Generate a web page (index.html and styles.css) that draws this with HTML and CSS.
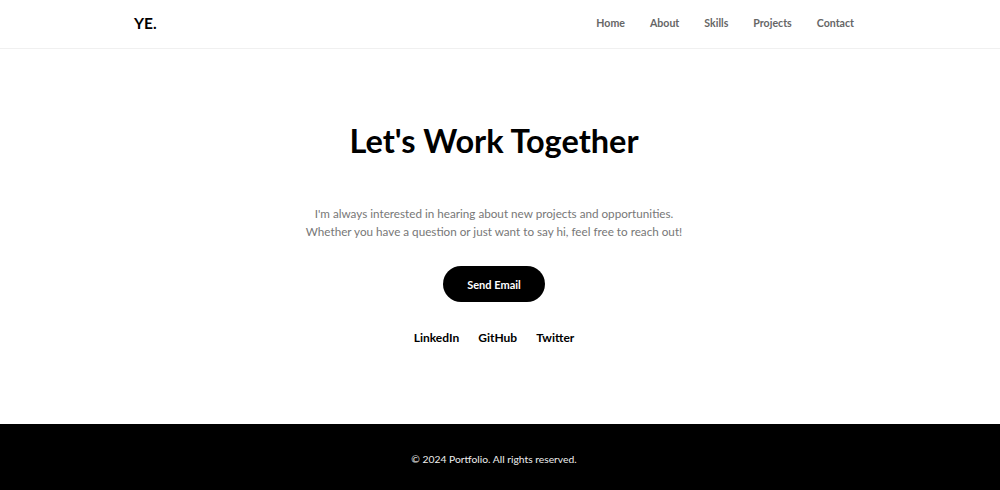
FILE: index.html
```html
<!DOCTYPE html>
<html lang="en">
<head>
<meta charset="utf-8">
<title>Portfolio</title>
<link rel="stylesheet" href="styles.css">
</head>
<body>
<header class="site-header">
  <div class="header-inner">
    <div class="logo">YE.</div>
    <nav class="nav">
      <a href="#">Home</a>
      <a href="#">About</a>
      <a href="#">Skills</a>
      <a href="#">Projects</a>
      <a href="#">Contact</a>
    </nav>
  </div>
</header>
<main class="contact">
  <h1 class="title">Let's Work Together</h1>
  <p class="lead">I'm always interested in hearing about new projects and opportunities.<br>Whether you have a question or just want to say hi, feel free to reach out!</p>
  <a class="btn" href="#">Send Email</a>
  <div class="socials">
    <a href="#">LinkedIn</a>
    <a href="#">GitHub</a>
    <a href="#">Twitter</a>
  </div>
</main>
<footer class="site-footer">
  <p>© 2024 Portfolio. All rights reserved.</p>
</footer>
</body>
</html>
```
FILE: styles.css
```css
* { box-sizing: border-box; }
html, body { margin: 0; padding: 0; }
body {
  font-family: Lato, "Open Sans", sans-serif;
  color: #000;
  background: #fff;
}
a { text-decoration: none; color: inherit; }

.site-header {
  height: 49px;
  border-bottom: 1px solid #f0f0f0;
  padding-right: 12px;
}
.header-inner {
  width: 720px;
  margin: 0 auto;
  height: 48px;
  padding-bottom: 2px;
  display: flex;
  align-items: center;
  justify-content: space-between;
}
.logo {
  font-weight: 700;
  font-size: 15.5px;
  line-height: 20px;
}
.nav {
  display: flex;
  gap: 25px;
}
.nav a {
  font-size: 10.6px;
  line-height: 16px;
  font-weight: 700;
  color: #666;
}

.contact {
  height: 375px;
  padding-right: 12px;
  display: flex;
  flex-direction: column;
  align-items: center;
  padding-top: 72px;
}
.title {
  margin: 0;
  font-size: 32.5px;
  font-weight: 700;
  line-height: 40px;
}
.lead {
  margin: 43px 0 0;
  text-align: center;
  font-size: 11.7px;
  line-height: 18px;
  color: #777;
}
.btn {
  margin-top: 26px;
  width: 102px;
  height: 36px;
  border-radius: 18px;
  background: #000;
  color: #fff;
  font-size: 11px;
  font-weight: 700;
  display: flex;
  align-items: center;
  justify-content: center;
}
.socials {
  margin-top: 28px;
  display: flex;
  gap: 19px;
}
.socials a {
  font-size: 12px;
  line-height: 16px;
  font-weight: 700;
}

.site-footer {
  background: #000;
  color: #fff;
  height: 66px;
  padding-right: 12px;
  padding-top: 3px;
  display: flex;
  align-items: center;
  justify-content: center;
}
.site-footer p {
  margin: 0;
  font-size: 10.3px;
  color: #eee;
}
```
